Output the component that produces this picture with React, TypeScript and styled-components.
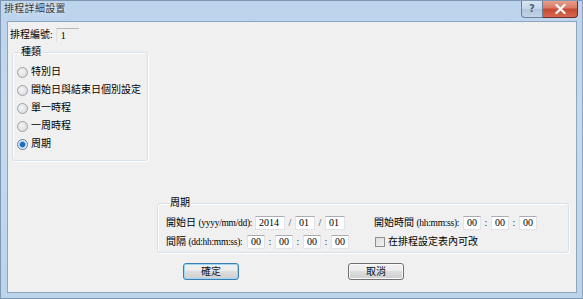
import React from "react";
import styled, { createGlobalStyle } from "styled-components";

const GlobalStyle = createGlobalStyle`
  html, body {
    margin: 0;
    padding: 0;
    background: #ffffff;
  }
  * {
    box-sizing: border-box;
  }
`;

const FONT = `"Liberation Serif", "Noto Sans CJK TC", serif`;

const App = () => {
  return (
    <>
      <GlobalStyle />
      <StWindow>
        <StTitleBar>
          <StTitle>排程詳細設置</StTitle>
          <StCaptionButtons>
            <StHelpButton>?</StHelpButton>
            <StCloseButton>
              <svg width="11" height="10" viewBox="0 0 11 10">
                <path
                  d="M1.5 1 L9.5 9 M9.5 1 L1.5 9"
                  stroke="#ffffff"
                  strokeWidth="2.2"
                  strokeLinecap="square"
                />
              </svg>
            </StCloseButton>
          </StCaptionButtons>
        </StTitleBar>
        <StClient>
          <StNumberRow>
            <StLabel>排程編號:</StLabel>
            <StReadOnlyBox>1</StReadOnlyBox>
          </StNumberRow>

          <StTypeGroup>
            <StLegend>種類</StLegend>
            <StRadioList>
              <Radio label="特別日" />
              <Radio label="開始日與結束日個別設定" />
              <Radio label="單一時程" />
              <Radio label="一周時程" />
              <Radio label="周期" checked />
            </StRadioList>
          </StTypeGroup>

          <StPeriodGroup>
            <StLegend>周期</StLegend>
            <StPeriodGrid>
              <StFieldRow>
                <StFieldLabel $width={89}>
                  開始日 <StHint>(yyyy/mm/dd):</StHint>
                </StFieldLabel>
                <StEdit $width={30}>2014</StEdit>
                <StSep>/</StSep>
                <StEdit $width={20}>01</StEdit>
                <StSep>/</StSep>
                <StEdit $width={20}>01</StEdit>
              </StFieldRow>
              <StFieldRow>
                <StFieldLabel $width={89}>
                  開始時間 <StHint>(hh:mm:ss):</StHint>
                </StFieldLabel>
                <StEdit $width={18}>00</StEdit>
                <StSep>:</StSep>
                <StEdit $width={18}>00</StEdit>
                <StSep>:</StSep>
                <StEdit $width={18}>00</StEdit>
              </StFieldRow>
              <StFieldRow>
                <StFieldLabel $width={81}>
                  間隔 <StHint>(dd:hh:mm:ss):</StHint>
                </StFieldLabel>
                <StEdit $width={18}>00</StEdit>
                <StSep>:</StSep>
                <StEdit $width={18}>00</StEdit>
                <StSep>:</StSep>
                <StEdit $width={18}>00</StEdit>
                <StSep>:</StSep>
                <StEdit $width={18}>00</StEdit>
              </StFieldRow>
              <StFieldRow>
                <StCheckBox />
                <StLabel>在排程設定表內可改</StLabel>
              </StFieldRow>
            </StPeriodGrid>
          </StPeriodGroup>

          <StButtonRow>
            <StButton $isDefault>確定</StButton>
            <StButton>取消</StButton>
          </StButtonRow>
        </StClient>
      </StWindow>
    </>
  );
};

const Radio = ({ label, checked }: { label: string; checked?: boolean }) => (
  <StRadioRow>
    <StRadioCircle $checked={!!checked} />
    <StLabel>{label}</StLabel>
  </StRadioRow>
);

export default App;

const StWindow = styled.div`
  width: 583px;
  height: 299px;
  display: flex;
  flex-direction: column;
  background: linear-gradient(180deg, #bcd3ec 0%, #c6daef 40%, #bdd3ea 100%);
  border: 1px solid #7f98b6;
  border-right-color: #8aa2bd;
  font-family: ${FONT};
  color: #000;
  overflow: hidden;
`;

const StTitleBar = styled.div`
  height: 20px;
  flex-shrink: 0;
  display: flex;
  align-items: flex-start;
  padding-left: 3px;
  padding-right: 4px;
`;

const StTitle = styled.span`
  font-size: 10px;
  line-height: 10px;
  margin-top: 3px;
  color: #3a3a3a;
  letter-spacing: 0.3px;
  text-shadow: 0 0 4px rgba(255, 255, 255, 0.9);
`;

const StCaptionButtons = styled.div`
  margin-left: auto;
  display: flex;
  margin-top: -1px;
`;

const StHelpButton = styled.div`
  width: 22px;
  height: 18px;
  border: 1px solid #6d7f96;
  border-top: none;
  border-radius: 0 0 0 4px;
  background: linear-gradient(180deg, #dbe6f3 0%, #c5d5e8 50%, #b2c5dc 51%, #c2d3e7 100%);
  color: #4b5f78;
  font-family: "DejaVu Sans", sans-serif;
  font-size: 10px;
  font-weight: bold;
  display: flex;
  align-items: center;
  justify-content: center;
`;

const StCloseButton = styled.div`
  width: 35px;
  height: 18px;
  border: 1px solid #6b2c2c;
  border-left: none;
  border-top: none;
  border-radius: 0 0 4px 0;
  background: linear-gradient(180deg, #e9a590 0%, #d97a66 45%, #c74a35 55%, #d7684f 100%);
  display: flex;
  align-items: center;
  justify-content: center;
`;

const StClient = styled.div`
  flex: 1;
  margin: 0 5px 5px 6px;
  background: #f0f0f0;
  border: 1px solid #8ea5bf;
  display: flex;
  flex-direction: column;
  align-items: flex-start;
  font-size: 10px;
`;

const StLabel = styled.span`
  font-size: 10px;
  line-height: 12px;
  white-space: nowrap;
`;

const StNumberRow = styled.div`
  display: flex;
  align-items: center;
  height: 14px;
  margin-top: 6px;
  padding-left: 2px;
  gap: 3px;
`;

const StReadOnlyBox = styled.div`
  width: 23px;
  height: 14px;
  border-top: 1px solid #b8b8b8;
  border-left: 1px solid #e0e0e0;
  padding-left: 4px;
  font-size: 10px;
  line-height: 13px;
`;

const StGroup = styled.div`
  display: flex;
  flex-direction: column;
  align-items: flex-start;
  border: 1px solid #d5dfe5;
  border-radius: 3px;
  box-shadow: inset 1px 1px 0 #ffffff, 1px 1px 0 #ffffff;
`;

const StLegend = styled.span`
  margin: -7px 0 0 3px;
  padding: 0 1px;
  background: #f0f0f0;
  font-size: 10px;
  line-height: 12px;
`;

const StTypeGroup = styled(StGroup)`
  width: 136px;
  height: 109px;
  margin-top: 10px;
  margin-left: 4px;
  padding-left: 4px;
`;

const StRadioList = styled.div`
  display: flex;
  flex-direction: column;
  gap: 6px;
  margin-top: 8px;
`;

const StRadioRow = styled.div`
  display: flex;
  align-items: center;
  gap: 3px;
  height: 12px;
`;

const StRadioCircle = styled.span<{ $checked: boolean }>`
  width: 11px;
  height: 11px;
  border-radius: 50%;
  border: 1px solid ${({ $checked }) => ($checked ? "#5b7fa6" : "#9aa3ad")};
  background: ${({ $checked }) =>
    $checked
      ? "radial-gradient(circle, #1f6fbf 0 2.2px, #6ea5db 2.8px, #e8eef5 3.6px, #dfe5ec 100%)"
      : "radial-gradient(circle at 40% 40%, #f4f4f4 0, #e2e2e2 60%, #cfcfcf 100%)"};
  flex-shrink: 0;
`;

const StPeriodGroup = styled(StGroup)`
  width: 412px;
  height: 50px;
  margin-top: 42px;
  margin-left: 149px;
  padding-left: 8px;
`;

const StPeriodGrid = styled.div`
  display: grid;
  grid-template-columns: 208px 1fr;
  row-gap: 5px;
  margin-top: 7px;
`;

const StFieldRow = styled.div`
  display: flex;
  align-items: center;
  height: 14px;
`;

const StFieldLabel = styled.span<{ $width: number }>`
  width: ${({ $width }) => $width}px;
  font-size: 10px;
  line-height: 12px;
  white-space: nowrap;
`;

const StHint = styled.span`
  font-size: 9.5px;
  letter-spacing: -0.3px;
`;

const StEdit = styled.div<{ $width: number }>`
  width: ${({ $width }) => $width}px;
  height: 14px;
  background: #ffffff;
  border: 1px solid #e2e3ea;
  border-top-color: #abadb3;
  padding-left: 3px;
  font-size: 10px;
  line-height: 12px;
`;

const StSep = styled.span`
  width: 10px;
  text-align: center;
  font-size: 10px;
  line-height: 12px;
  color: #333;
`;

const StCheckBox = styled.span`
  width: 10px;
  height: 10px;
  border: 1px solid #8f8f8f;
  background: linear-gradient(135deg, #dcdcdc 0%, #f4f4f4 100%);
  margin-left: 1px;
  margin-right: 3px;
`;

const StButtonRow = styled.div`
  display: flex;
  margin-top: 10px;
  padding-left: 175px;
  gap: 109px;
`;

const StButton = styled.button<{ $isDefault?: boolean }>`
  width: 56px;
  height: 17px;
  padding: 0;
  border-radius: 3px;
  border: 1px solid ${({ $isDefault }) => ($isDefault ? "#3c7fb1" : "#707070")};
  box-shadow: inset 0 0 0 1px
    ${({ $isDefault }) => ($isDefault ? "#9fd6f4" : "#fbfbfb")};
  background: linear-gradient(180deg, #f2f2f2 0%, #ebebeb 49%, #dddddd 50%, #cfcfcf 100%);
  font-family: ${FONT};
  font-size: 10px;
  line-height: 12px;
  color: #111;
`;
